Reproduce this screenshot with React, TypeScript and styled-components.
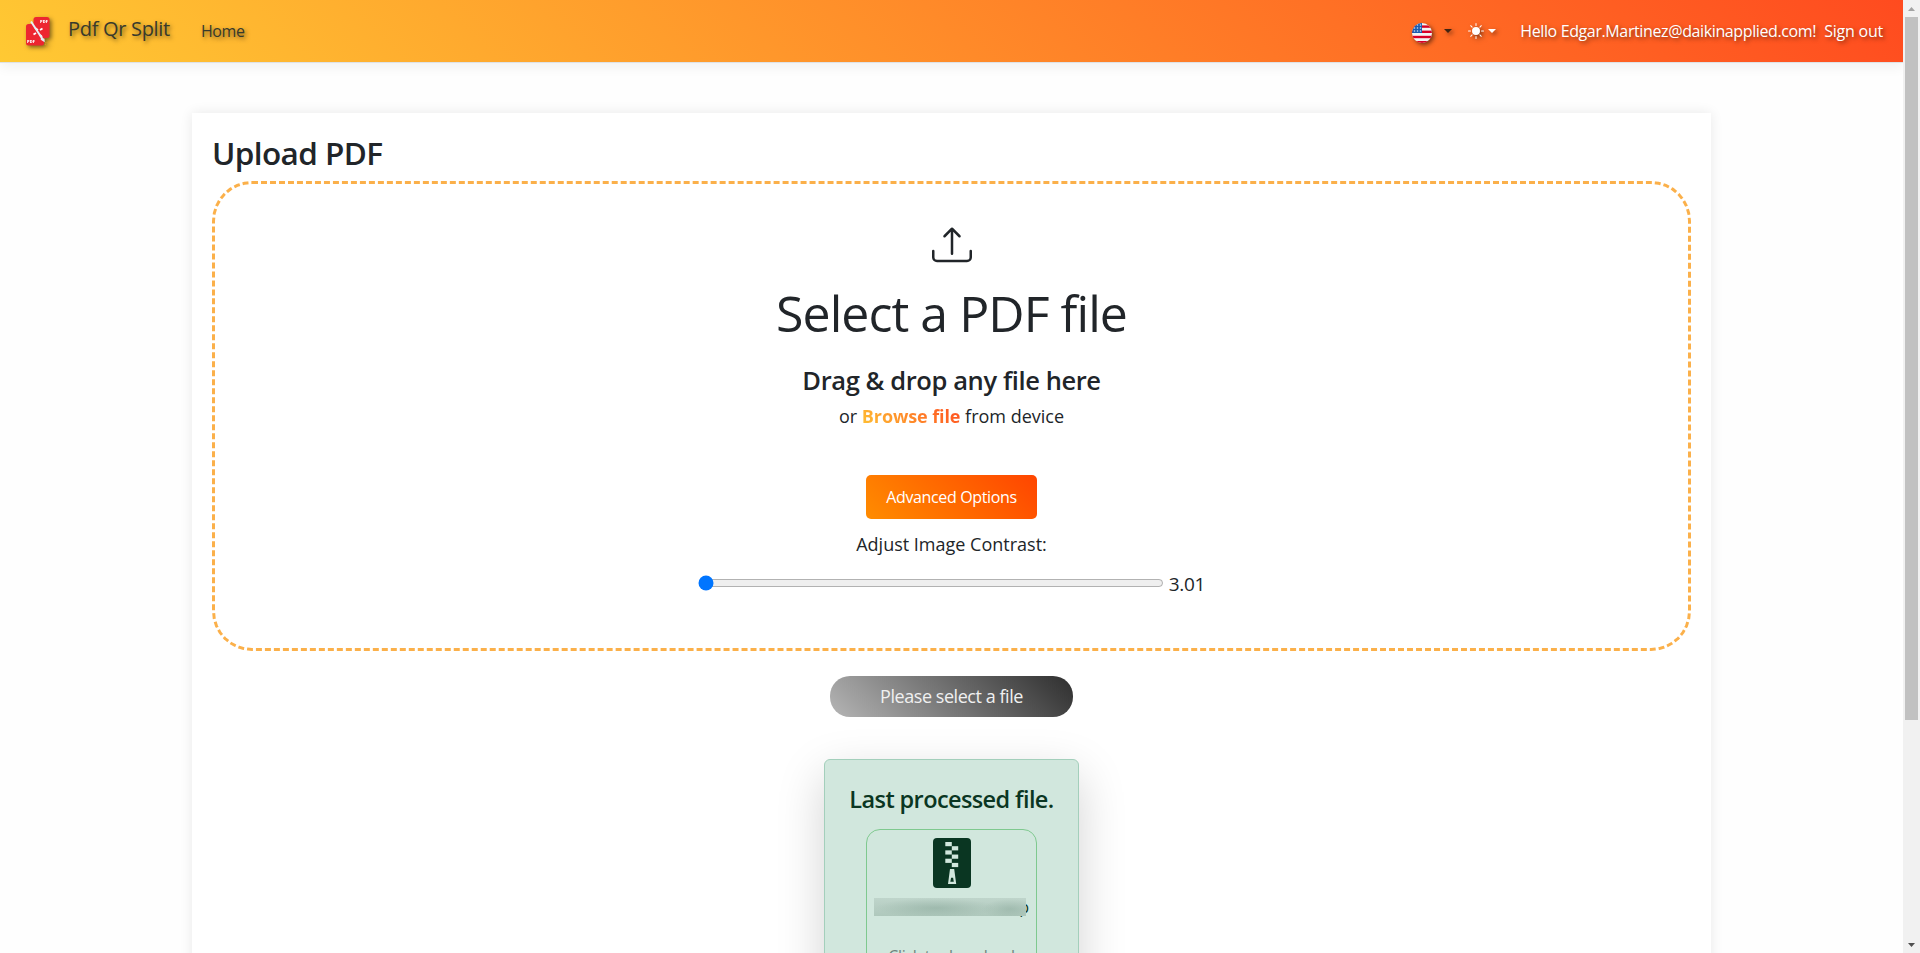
import React from "react";
import styled, { createGlobalStyle } from "styled-components";
import { BsUpload, BsSunFill } from "react-icons/bs";

const GlobalStyle = createGlobalStyle`
  * { box-sizing: border-box; }
  html, body { margin: 0; height: 953px; overflow: hidden; background: #fefefe; }
  body { font-family: "Segoe UI", "Open Sans", "Noto Sans", sans-serif; color: #212529; font-size: 16px; line-height: 24px; }
  h1, h2, h3, h4, p { margin: 0; white-space: nowrap; }
`;

const Screen = styled.div`
  display: flex;
  width: 1920px;
  height: 953px;
  overflow: hidden;
`;

const Page = styled.div`
  display: flex;
  flex-direction: column;
  width: 1903px;
  height: 953px;
  overflow: hidden;
`;

const Navbar = styled.header`
  display: flex;
  align-items: flex-start;
  flex: none;
  height: 63px;
  padding: 0 20px 0 24px;
  border-bottom: 1px solid #dee2e6;
  background: linear-gradient(45deg, #ffc933 0%, #ff4b1f 100%);
  background-clip: padding-box;
  box-shadow: 0 4px 12px rgba(0, 0, 0, 0.06);
`;

const NavText = styled.a<{ $size?: number; $light?: boolean; $top: number; $left: number; $spacing: number }>`
  margin: ${(p) => p.$top}px 0 0 ${(p) => p.$left}px;
  font-size: ${(p) => p.$size ?? 16}px;
  line-height: 24px;
  letter-spacing: ${(p) => p.$spacing}px;
  color: ${(p) => (p.$light ? "#fff" : "#373a2c")};
  text-shadow: 2px 2px 4px rgba(0, 0, 0, 0.5);
  white-space: nowrap;
`;

const Logo = styled.svg`
  flex: none;
  width: 32px;
  height: 34px;
  margin-top: 15px;
  overflow: visible;
  filter: drop-shadow(2px 2px 2px rgba(0, 0, 0, 0.5));
`;

const Spacer = styled.div`
  flex: 1;
`;

const Flag = styled.svg`
  flex: none;
  width: 20px;
  height: 20px;
  margin-top: 23px;
  overflow: visible;
  filter: drop-shadow(2px 2px 2px rgba(0, 0, 0, 0.5));
`;

const Caret = styled.span<{ $color: string; $left: number }>`
  flex: none;
  width: 8px;
  height: 4px;
  margin: 29px 0 0 ${(p) => p.$left}px;
  border-top: 4px solid ${(p) => p.$color};
  border-left: 4px solid transparent;
  border-right: 4px solid transparent;
  filter: drop-shadow(2px 2px 2px rgba(0, 0, 0, 0.5));
`;

const Sun = styled(BsSunFill)`
  flex: none;
  width: 16px;
  height: 16px;
  margin: 23px 0 0 16px;
  color: #fff;
  overflow: visible;
  filter: drop-shadow(2px 2px 2px rgba(0, 0, 0, 0.5));
`;

const Card = styled.main`
  width: 1519px;
  height: 900px;
  flex: none;
  margin: 50px 0 0 192px;
  padding: 20px;
  background: #fff;
  box-shadow: 0 0 12px rgba(0, 0, 0, 0.09);
`;

const Title = styled.h2`
  height: 48px;
  font-size: 31.5px;
  line-height: 40px;
  font-weight: 600;
  letter-spacing: -0.6px;
`;

const DropZone = styled.section`
  display: flex;
  flex-direction: column;
  align-items: center;
  height: 470px;
  padding-top: 41px;
  border: 3px dashed #fbb04a;
  border-radius: 40px;
`;

const UploadIcon = styled(BsUpload)`
  flex: none;
  width: 40px;
  height: 40px;
`;

const Line = styled.p<{ $size: number; $height: number; $top?: number; $weight?: number; $spacing?: number }>`
  margin-top: ${(p) => p.$top ?? 0}px;
  font-size: ${(p) => p.$size}px;
  line-height: ${(p) => p.$height}px;
  font-weight: ${(p) => p.$weight ?? 400};
  letter-spacing: ${(p) => p.$spacing ?? 0}px;
  white-space: nowrap;
`;

const Browse = styled.strong`
  font-weight: 700;
  letter-spacing: -0.1px;
  color: transparent;
  background: linear-gradient(45deg, #ffc233, #ff4b1f);
  background-clip: text;
`;

const AdvancedButton = styled.button`
  flex: none;
  width: 171px;
  height: 44px;
  margin-top: 45px;
  padding: 0;
  border: 0;
  border-radius: 5px;
  font: inherit;
  letter-spacing: -0.35px;
  color: #fff;
  background: linear-gradient(45deg, #ff8c00, #ff4500);
`;

const SliderRow = styled.div`
  display: flex;
  align-items: center;
  gap: 5px;
  height: 30px;
  margin-top: 10px;
`;

const Slider = styled.input`
  width: 466px;
  height: 16px;
  margin: 0;
`;

const SliderValue = styled.output`
  padding-top: 1px;
  font-size: 19px;
  line-height: 30px;
  letter-spacing: -0.3px;
`;

const SubmitButton = styled.button`
  display: block;
  width: 243px;
  height: 41px;
  margin: 25px auto 0;
  padding: 0 0 1px;
  border: 0;
  border-radius: 20px;
  font: inherit;
  font-size: 18px;
  letter-spacing: -0.45px;
  color: #f0f0f0;
  background: linear-gradient(45deg, #b5b5b5, #2e2e2e);
`;

const Result = styled.section`
  display: flex;
  flex-direction: column;
  align-items: center;
  width: 255px;
  height: 300px;
  margin: 42px auto 0;
  padding-top: 22px;
  border: 1px solid #a3cfbb;
  border-radius: 6px;
  color: #0a3622;
  background: #d1e7dd;
  box-shadow: 0 16px 48px rgba(0, 0, 0, 0.18);
`;

const FileBox = styled.div`
  display: flex;
  flex-direction: column;
  align-items: center;
  width: 171px;
  height: 200px;
  margin-top: 12px;
  padding-top: 8px;
  border: 1px solid #7fc98f;
  border-radius: 14px;
`;

const ZipSvg = styled.svg`
  flex: none;
  width: 38px;
  height: 50px;
`;

const FileName = styled.div`
  display: flex;
  justify-content: flex-end;
  position: relative;
  width: 155px;
  height: 24px;
  margin-top: 7px;
  font-size: 16px;
`;

const Redaction = styled.div`
  position: absolute;
  left: 0;
  top: 3px;
  width: 152px;
  height: 18px;
  background:
    radial-gradient(ellipse 60px 10px at 62px 10px, rgba(130, 162, 148, 0.45), transparent),
    radial-gradient(ellipse 28px 10px at 136px 11px, rgba(130, 162, 148, 0.4), transparent),
    linear-gradient(#bfd5cb, #afc8bc);
`;

const Hint = styled.p`
  margin-top: 25px;
  font-size: 16px;
  line-height: 24px;
  letter-spacing: -0.3px;
  color: #6f837c;
`;

const Scrollbar = styled.div`
  display: flex;
  flex-direction: column;
  align-items: center;
  flex: none;
  width: 17px;
  height: 953px;
  background: #f1f1f1;
`;

const Arrow = styled.span<{ $down?: boolean }>`
  flex: none;
  width: 17px;
  height: 17px;
  background: ${(p) => (p.$down ? "#505050" : "#a3a3a3")};
  clip-path: ${(p) =>
    p.$down ? "polygon(5px 7px, 12px 7px, 8.5px 11px)" : "polygon(5px 11px, 12px 11px, 8.5px 7px)"};
`;

const Thumb = styled.div`
  width: 13px;
  height: 703px;
  margin-bottom: auto;
  background: #c1c1c1;
`;

function AppLogo() {
  return (
    <Logo viewBox="0 0 32 34">
      <rect x="9.5" y="2" width="16" height="21" rx="2.5" fill="#ed2630" />
      <path d="M4.5 9H10l10 14v5.5a2 2 0 0 1-2 2H4.500a2.500 2.500 0 0 1-2.500-2.500V11.500A2.500 2.500 0 0 1 4.500 9Z" fill="#ed2630" />
      <text x="16" y="8.3" fontSize="4" fontWeight="800" fill="#fff" textLength="8">PDF</text>
      <text x="3" y="28.2" fontSize="4" fontWeight="800" fill="#fff" textLength="8">PDF</text>
      <path d="M9.500 19.500l2.500-1.500M16 15l2.500-1.500M11 13l3 2M16 20l2 2" stroke="#fff" strokeWidth="1.8" />
      <path d="M7 6.500 18.500 24" stroke="#e7eef5" strokeWidth="2" />
      <path d="M17 22.500l3.500 1.300.2 3.400-4-2.500Z" fill="#e7eef5" />
      <path d="M21 28l4-1M21 29l2 3" stroke="#e39b25" strokeWidth="1" strokeDasharray="1.5 1" />
    </Logo>
  );
}

function UsFlag() {
  return (
    <Flag viewBox="0 0 20 20">
      <defs>
        <clipPath id="flag-circle"><circle cx="10" cy="10" r="10" /></clipPath>
      </defs>
      <g clipPath="url(#flag-circle)">
        <rect width="20" height="20" fill="#f4f4f4" />
        {[2.4, 7.6, 12.8, 18].map((y) => (
          <rect key={y} y={y} width="20" height="2.4" fill="#d80027" />
        ))}
        <rect width="10" height="10" fill="#1a5bb0" />
        {[2, 5, 8].map((y) =>
          [2.5, 5.5, 8.5].map((x) => <circle key={`${x}-${y}`} cx={x} cy={y} r=".8" fill="#cfe0f5" />)
        )}
      </g>
    </Flag>
  );
}

function ZipIcon() {
  return (
    <ZipSvg viewBox="0 0 38 50">
      <rect width="38" height="50" rx="4" fill="#0a3622" />
      <g fill="#d1e7dd">
        {[0, 1, 2].map((i) => (
          <React.Fragment key={i}>
            <rect x="12.3" y={4 + i * 8.35} width="6.5" height="4.2" />
            <rect x="18.8" y={8.2 + i * 8.35} width="6.4" height="4.2" />
          </React.Fragment>
        ))}
        <path fillRule="evenodd" d="M17 31h4.200L23.200 46H15ZM18.100 39.700h2L20.800 43.700h-3.500Z" />
      </g>
    </ZipSvg>
  );
}

export default function App() {
  return (
    <Screen>
      <GlobalStyle />
      <Page>
        <Navbar>
          <AppLogo />
          <NavText $size={20} $top={17} $left={12} $spacing={-0.3}>Pdf Qr Split</NavText>
          <NavText $top={19} $left={31} $spacing={-0.4}>Home</NavText>
          <Spacer />
          <UsFlag />
          <Caret $color="#402312" $left={12} />
          <Sun />
          <Caret $color="#fff" $left={4} />
          <NavText $light $top={19} $left={24} $spacing={-0.38}>Hello Edgar.Martinez@daikinapplied.com!</NavText>
          <NavText $light $top={19} $left={8} $spacing={-0.22}>Sign out</NavText>
        </Navbar>
        <Card>
          <Title>Upload PDF</Title>
          <DropZone>
            <UploadIcon />
            <Line as="h1" $size={50} $height={60} $top={18} $spacing={-0.95}>Select a PDF file</Line>
            <Line as="h3" $size={25.5} $height={32} $top={21} $weight={600} $spacing={-0.4}>Drag &amp; drop any file here</Line>
            <Line $size={18} $height={28} $top={6}>
              or <Browse>Browse file</Browse> from device
            </Line>
            <AdvancedButton>Advanced Options</AdvancedButton>
            <Line $size={18} $height={28} $top={11}>Adjust Image Contrast:</Line>
            <SliderRow>
              <Slider type="range" min={3.01} max={10} step={0.01} defaultValue={3.01} />
              <SliderValue>3.01</SliderValue>
            </SliderRow>
          </DropZone>
          <SubmitButton>Please select a file</SubmitButton>
          <Result>
            <Line as="h4" $size={23.5} $height={35} $weight={600} $spacing={-0.6}>Last processed file.</Line>
            <FileBox>
              <ZipIcon />
              <FileName>
                p
                <Redaction />
              </FileName>
              <Hint>Click to download</Hint>
            </FileBox>
          </Result>
        </Card>
      </Page>
      <Scrollbar>
        <Arrow />
        <Thumb />
        <Arrow $down />
      </Scrollbar>
    </Screen>
  );
}
